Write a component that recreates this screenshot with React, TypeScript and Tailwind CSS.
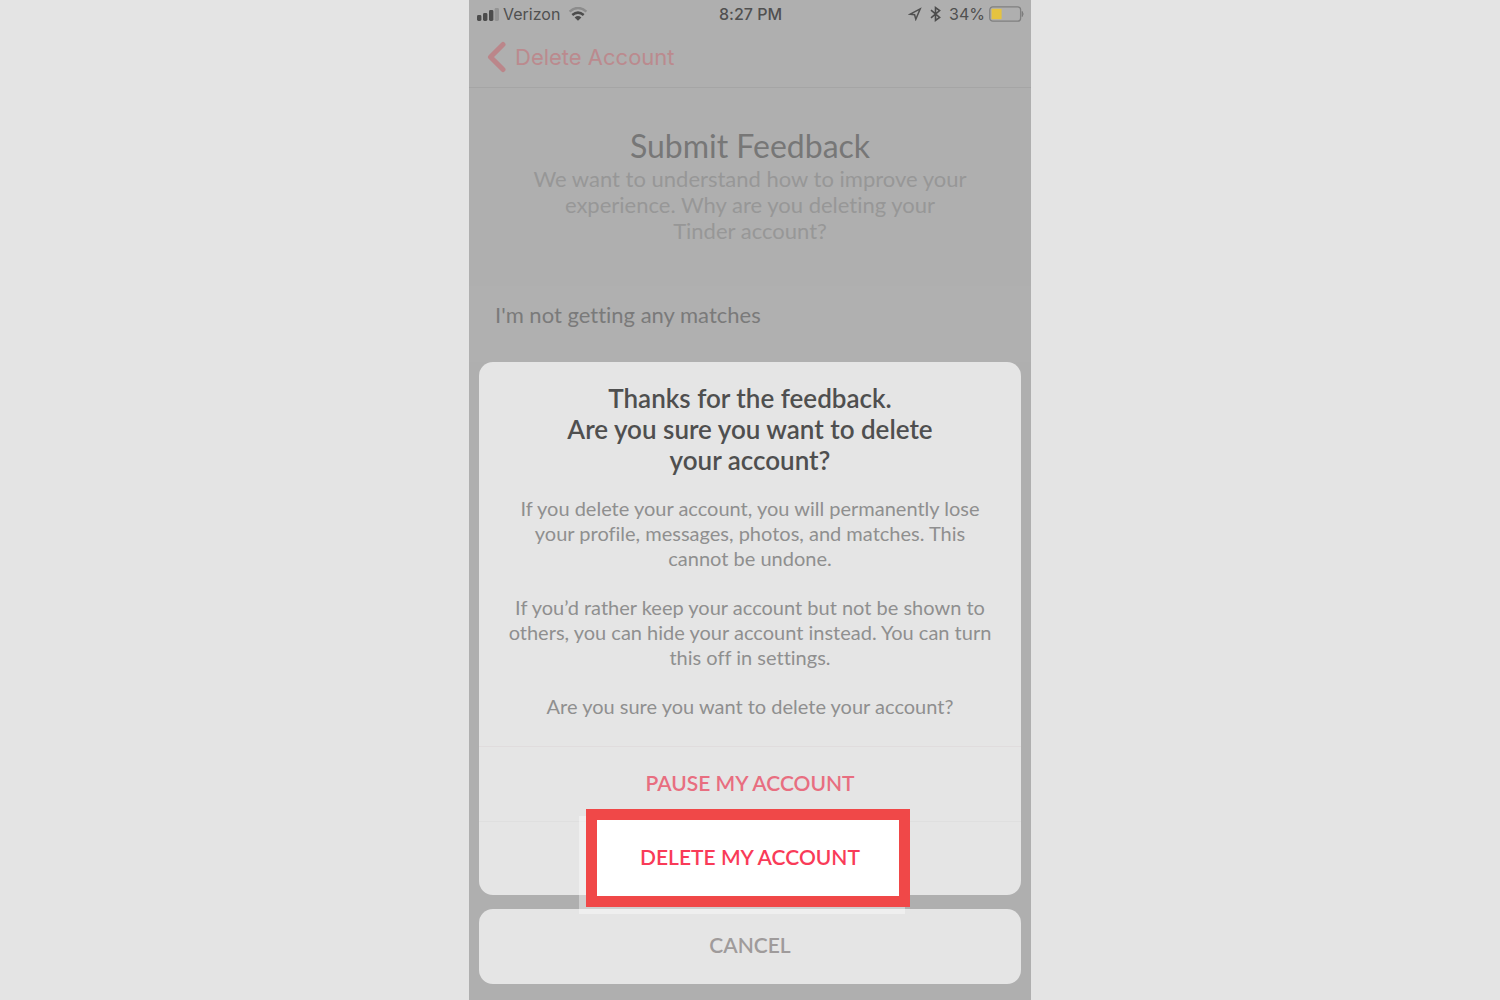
import React from "react";

function StatusBar() {
  return (
    <div className="grid h-7 grid-cols-3 items-center pl-2 pr-[7px] font-['Inter','Liberation_Sans',sans-serif] text-base text-[#505050]">
      <div className="flex items-center gap-1">
        <svg width="22" height="13" viewBox="0 0 22 13" aria-hidden="true">
          <rect x="0" y="7" width="4.4" height="6" rx="1.4" fill="#4c4c4c" />
          <rect x="6" y="5" width="4.4" height="8" rx="1.4" fill="#4c4c4c" />
          <rect x="12" y="2" width="4.4" height="11" rx="1.4" fill="#4c4c4c" />
          <rect x="17.6" y="0" width="4.4" height="13" rx="1.4" fill="#949494" />
        </svg>
        <span>Verizon</span>
        <svg className="ml-1" width="20" height="14" viewBox="0 0 20 14" fill="none" aria-hidden="true">
          <path d="M1.6 4.6Q10-2.6 18.4 4.6" stroke="#8c8c8c" strokeWidth="2.4" />
          <path d="M4.3 8Q10 3.2 15.7 8" stroke="#4c4c4c" strokeWidth="2.5" />
          <path d="M6.6 10.4Q10 7.8 13.4 10.4L10 13.8Z" fill="#4c4c4c" />
        </svg>
      </div>
      <div className="text-center font-medium">8:27 PM</div>
      <div className="flex items-center justify-end">
        <svg className="mr-2" width="14" height="14" viewBox="0 0 14 14" fill="none" stroke="#505050" strokeWidth="1.5" strokeLinejoin="miter" aria-hidden="true">
          <path d="M12.2 1.8L2.2 7.2L6.6 7.7L7.8 12.2Z" />
        </svg>
        <svg className="mr-2" width="11" height="16" viewBox="0 0 11 16" fill="none" stroke="#4c4c4c" strokeWidth="1.6" aria-hidden="true">
          <path d="M1 4.2L9.6 11.4L5.5 14.4V1.6L9.6 4.6L1 11.8" />
        </svg>
        <span className="mr-1">34%</span>
        <svg width="35" height="16" viewBox="0 0 35 16" aria-hidden="true">
          <rect x=".8" y=".8" width="30.8" height="14.4" rx="3" fill="none" stroke="#808080" strokeWidth="1.3" />
          <rect x="2.6" y="2.8" width="10" height="10.4" fill="#e5c340" />
          <path d="M33.2 5.5Q35 8 33.2 10.5Z" fill="#7b7b7b" stroke="#7b7b7b" />
        </svg>
      </div>
    </div>
  );
}

export default function App() {
  return (
    <div className="min-h-screen bg-[#e4e4e4] font-['Lato','Liberation_Sans',sans-serif] [font-variant-ligatures:none]">
      <main className="mx-auto min-h-screen w-full max-w-[562px] bg-[#afafaf] pb-4">
        <StatusBar />
        <nav className="flex h-15 items-center border-b border-[#a5a5a5] pb-[2px] pl-[18px]">
          <button type="button" className="flex items-center gap-2 font-['Inter','Liberation_Sans',sans-serif] text-[22px] leading-7 text-[#bb8a8e]">
            <svg width="20" height="32" viewBox="0 0 20 32" fill="none" stroke="#bb868a" strokeWidth="5" strokeLinecap="round" strokeLinejoin="round" aria-hidden="true">
              <path d="M16 3.5L3.5 16L16 28.5" />
            </svg>
            Delete Account
          </button>
        </nav>

        <header className="h-[198px] px-16 pt-[38px] text-center">
          <h1 className="text-[32px] leading-10 text-[#777777]">Submit Feedback</h1>
          <p className="text-[22px] leading-[26px] text-[#979797]">
            We want to understand how to improve your
            <br />
            experience. Why are you deleting your
            <br />
            Tinder account?
          </p>
        </header>

        <div className="flex h-[76px] items-start bg-[#b0b0b0] px-[26px] pt-4 text-[22px] leading-[26px] text-[#7a7a7a]">
          I'm not getting any matches
        </div>

        <div className="px-[10px]">
          <section role="dialog" aria-labelledby="confirm-title" className="rounded-[14px] bg-[#e5e5e5] text-center">
            <div className="px-2 pt-[21px] pb-[27px]">
              <h2 id="confirm-title" className="text-[26px] leading-[31px] font-semibold text-[#4f4f4f]">
                Thanks for the feedback.
                <br />
                Are you sure you want to delete
                <br />
                your account?
              </h2>
              <div className="mt-5 flex flex-col gap-6 text-[20px] leading-[25px] text-[#8f8f8f]">
                <p>
                  If you delete your account, you will permanently lose
                  <br />
                  your profile, messages, photos, and matches. This
                  <br />
                  cannot be undone.
                </p>
                <p>
                  If you’d rather keep your account but not be shown to
                  <br />
                  others, you can hide your account instead. You can turn
                  <br />
                  this off in settings.
                </p>
                <p>Are you sure you want to delete your account?</p>
              </div>
            </div>
            <button type="button" className="flex h-[75px] w-full items-center justify-center border-t border-[#e0dcdd] pb-[3px] text-[21px] leading-6 font-semibold text-[#e86e80]">
              PAUSE MY ACCOUNT
            </button>
            <button type="button" className="relative z-10 flex h-[74px] w-full items-center justify-center border-t border-[#dfdfdf] pb-[3px] text-[21px] leading-6 font-semibold text-[#f93b58]">
              <span className="absolute top-[-6px] -bottom-[19px] right-[116px] left-[100px] bg-white/40" />
              <span className="absolute top-[-13px] -bottom-3 right-[111px] left-[107px] border-[11px] border-[#f04848] bg-white" />
              <span className="relative">DELETE MY ACCOUNT</span>
            </button>
          </section>
          <button type="button" className="mt-[14px] flex h-[75px] w-full items-center justify-center rounded-[14px] bg-[#e5e5e5] pb-[3px] text-[21px] leading-6 font-semibold text-[#9f9b9b]">
            CANCEL
          </button>
        </div>
      </main>
    </div>
  );
}
